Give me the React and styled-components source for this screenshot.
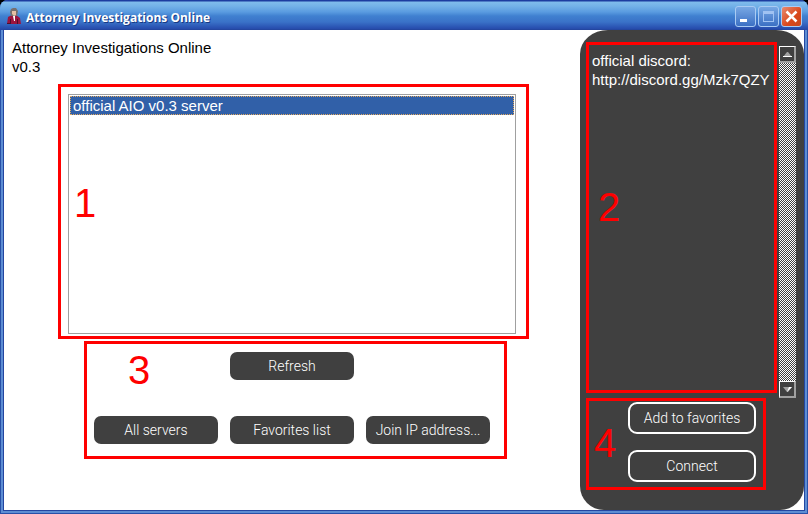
import React from "react";
import styled, { createGlobalStyle, css } from "styled-components";

const Global = createGlobalStyle`
  * { box-sizing: border-box; }
  html, body, #root { height: 100%; margin: 0; }
  body {
    background: #000;
    font-family: "Liberation Sans", Arial, sans-serif;
    font-size: 15px;
    line-height: 19px;
    overflow: hidden;
  }
  button { font: inherit; padding: 0; margin: 0; cursor: pointer; }
`;

const Window = styled.div`
  display: flex;
  flex-direction: column;
  height: 100%;
  padding: 0 4px 4px;
  border-radius: 8px 8px 0 0;
  overflow: hidden;
  background: #5d8dd3;
  box-shadow: inset 1px 0 #2850a8, inset -1px 0 #2850a8, inset 0 -1px #2850a8;
`;

const TitleBar = styled.header`
  display: flex;
  align-items: center;
  flex: none;
  height: 30px;
  margin: 0 -4px;
  padding: 3px 6px 0;
  gap: 4px;
  background: linear-gradient(
    #1c3ca0 0, #1c3ca0 1px, #7fbcec 2px, #74b2e8 6px, #5a9be0 12px,
    #4080d0 16px, #3a72c8 22px, #2b55b4 27px, #2446a6 30px
  );
`;

const Title = styled.h1`
  flex: 1;
  margin: 0;
  padding-top: 2px;
  color: #fff;
  font: 700 12px/18px "Open Sans", sans-serif;
  text-shadow: 1px 1px #173a84;
`;

const Controls = styled.div`
  display: flex;
  gap: 2px;
`;

const ControlButton = styled.button`
  display: flex;
  width: 21px;
  height: 21px;
  border: 1px solid #a9cbf3;
  border-radius: 3px;
  background: ${(p) =>
    p.$danger
      ? "linear-gradient(135deg, #e88a70, #d9481c 60%, #c84820)"
      : "linear-gradient(#78a8e4, #3b70c4)"};
`;

const Client = styled.main`
  display: flex;
  flex: 1;
  min-height: 0;
  background: #fff;
  outline: 1px solid #2446a0;
`;

const Lobby = styled.section`
  display: flex;
  flex-direction: column;
  flex: 1;
  min-width: 0;
  padding-right: 51px;
`;

const Version = styled.p`
  margin: 8px 0 8px 8px;
  height: 38px;
  color: #000;
`;

const Frame = styled.section`
  position: relative;
  border: 3px solid #f00;
`;

const ListFrame = styled(Frame)`
  height: 255px;
  margin-left: 54px;
  padding: 7px 10px 2px 7px;
`;

const ActionsFrame = styled(Frame)`
  display: grid;
  grid-template-columns: repeat(3, 1fr);
  align-content: space-between;
  gap: 0 12px;
  height: 118px;
  margin: 2px 22px 0 80px;
  padding: 8px 14px 12px 7px;
`;

const Marker = styled.span`
  position: absolute;
  left: ${(p) => p.$left}px;
  top: ${(p) => p.$top}px;
  color: #f00;
  font: 400 40px/40px "Liberation Sans Narrow", "Liberation Sans", sans-serif;
  pointer-events: none;
`;

const ServerList = styled.ul`
  height: 240px;
  margin: 0;
  padding: 1px;
  border: 1px solid #a0a0a0;
  list-style: none;
`;

const ServerButton = styled.button`
  display: block;
  width: 100%;
  height: 19px;
  border: 1px dotted #e0a860;
  padding-left: 2px;
  background: #3160a8;
  color: #fff;
  line-height: 17px;
  text-align: left;
`;

const ActionButton = styled.button`
  height: 28px;
  border: 0;
  border-radius: 7px;
  background: #404040;
  color: #fff;
  font-family: Roboto, "Liberation Sans", sans-serif;
  font-size: 14px;
  font-weight: 300;
  line-height: 26px;
  ${(p) => p.$middle && css`grid-column: 2;`}
  ${(p) => p.$first && css`grid-column: 1;`}
  ${(p) => p.$outlined && css`
    height: 32px;
    border: 2px solid #fff;
    border-radius: 9px;
  `}
`;

const SidePanel = styled.aside`
  display: flex;
  flex-direction: column;
  flex: none;
  width: 224px;
  padding: 12px 8px 0 6px;
  border-radius: 28px 28px 24px 24px / 24px;
  background: #404040;
  color: #fff;
`;

const NewsRow = styled.div`
  display: flex;
  align-items: flex-start;
  gap: 2px;
`;

const News = styled(Frame)`
  flex: 1;
  min-width: 0;
  height: 351px;
  padding: 6px 0 0 3px;
  white-space: nowrap;
  a { color: inherit; text-decoration: none; }
  p { margin: 0; }
`;

const Scrollbar = styled.div`
  display: flex;
  flex-direction: column;
  justify-content: space-between;
  width: 17px;
  height: 352px;
  margin-top: 4px;
  background: repeating-conic-gradient(#fff 0 25%, #404040 0 50%) 0 0 / 2px 2px;
`;

const ScrollButton = styled.button`
  display: flex;
  align-items: center;
  justify-content: center;
  width: 17px;
  height: 17px;
  border: 1px solid #fff;
  border-right: 2px solid #a0a0a0;
  border-bottom: 2px solid #a0a0a0;
  background: #404040;
`;

const JoinFrame = styled(Frame)`
  display: flex;
  flex-direction: column;
  gap: 16px;
  height: 92px;
  margin-right: 30px;
  padding: 1px 7px 0 39px;
`;

const AppIcon = () => (
  <svg width="16" height="18" viewBox="0 0 16 18" aria-hidden="true">
    <path d="M2 9l4-2h4l4 3 1 6H1z" fill="#9b1440" />
    <path d="M5 1l2-1h3l2 3-1 5H5L4 4z" fill="#77706f" />
    <path d="M6 3h4v4L8 8 6 6z" fill="#e6bfa4" />
    <path d="M7 8h2v5H8z" fill="#fff" />
    <path d="M1 15h3v1H1zM4 11h1v5H4zM11 11h1v5h-1z" fill="#4f0d2b" />
  </svg>
);

export default function App() {
  return (
    <>
      <Global />
      <Window>
        <TitleBar>
          <AppIcon />
          <Title>Attorney Investigations Online</Title>
          <Controls>
            <ControlButton aria-label="Minimize">
              <svg width="19" height="19"><path d="M4 12h7v3H4z" fill="#fff" /></svg>
            </ControlButton>
            <ControlButton aria-label="Maximize">
              <svg width="19" height="19">
                <path d="M4 4h11v11H4zM5 7v7h9V7z" fill="#a0c2f2" fillRule="evenodd" />
              </svg>
            </ControlButton>
            <ControlButton aria-label="Close" $danger>
              <svg width="19" height="19"><path d="M4.500 4.500l10 10M14.500 4.500l-10 10" stroke="#fff" strokeWidth="2.500" /></svg>
            </ControlButton>
          </Controls>
        </TitleBar>
        <Client>
          <Lobby>
            <Version>Attorney Investigations Online<br />v0.3</Version>
            <ListFrame aria-label="Servers">
              <ServerList>
                <li><ServerButton>official AIO v0.3 server</ServerButton></li>
              </ServerList>
              <Marker $left={13} $top={96}>1</Marker>
            </ListFrame>
            <ActionsFrame aria-label="Server actions">
              <ActionButton $middle>Refresh</ActionButton>
              <ActionButton $first>All servers</ActionButton>
              <ActionButton>Favorites list</ActionButton>
              <ActionButton>Join IP address...</ActionButton>
              <Marker $left={41} $top={6}>3</Marker>
            </ActionsFrame>
          </Lobby>
          <SidePanel>
            <NewsRow>
              <News aria-label="News">
                <p>official discord:</p>
                <a href="http://discord.gg/Mzk7QZY">http://discord.gg/Mzk7QZY</a>
                <Marker $left={9} $top={142}>2</Marker>
              </News>
              <Scrollbar>
                <ScrollButton aria-label="Scroll up">
                  <svg width="9" height="5"><path d="M0 5L4 0h1l4 5z" fill="#a0a0a0" /><path d="M0 4h9v1H0z" fill="#fff" /></svg>
                </ScrollButton>
                <ScrollButton aria-label="Scroll down">
                  <svg width="9" height="5"><path d="M0 0h9L5 5H4z" fill="#a0a0a0" /><path d="M4 5L9 0H6z" fill="#fff" /></svg>
                </ScrollButton>
              </Scrollbar>
            </NewsRow>
            <JoinFrame aria-label="Join server">
              <ActionButton $outlined>Add to favorites</ActionButton>
              <ActionButton $outlined>Connect</ActionButton>
              <Marker $left={5} $top={22}>4</Marker>
            </JoinFrame>
          </SidePanel>
        </Client>
      </Window>
    </>
  );
}
